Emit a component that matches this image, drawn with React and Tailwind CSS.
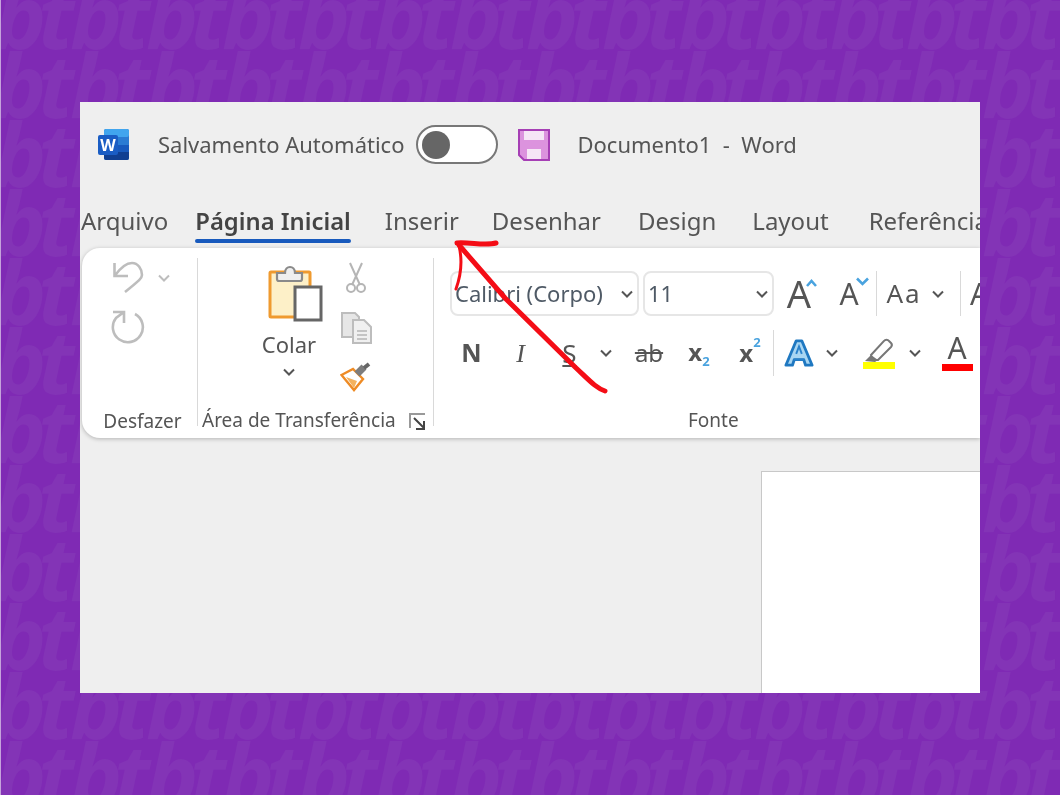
const patternRows = Array.from({ length: 14 }, (_, i) => i);
const patternCols = Array.from({ length: 16 }, (_, i) => i);

function Pattern() {
  return (
    <div className="absolute inset-0 overflow-hidden select-none">
      <div className="-ml-[38px] -mt-[88px]">
        {patternRows.map((row) => (
          <div
            key={row}
            className="flex whitespace-nowrap text-[88px] leading-[69px] font-bold italic text-[#8334b6] font-['Open_Sans',sans-serif] tracking-[-4px]"
          >
            {patternCols.map((col) => (
              <span key={col} className="w-[76px] shrink-0">tb</span>
            ))}
          </div>
        ))}
      </div>
      <div className="absolute left-0 top-0 bottom-0 w-px bg-[#c5a3dc]" />
    </div>
  );
}

function Chevron({ className = "", color = "#555" }) {
  return (
    <svg width="14" height="10" viewBox="0 0 14 10" className={`shrink-0 ${className}`}>
      <path d="M2 2.5 7 7.5 12 2.5" fill="none" stroke={color} strokeWidth="2" />
    </svg>
  );
}

function WordLogo() {
  return (
    <svg width="32" height="32" viewBox="0 0 32 32">
      <rect x="6" y="0" width="25" height="31" rx="2" fill="#2b7cd3" />
      <rect x="6" y="0" width="25" height="8" rx="2" fill="#41a5ee" />
      <rect x="6" y="16" width="25" height="8" fill="#185abd" />
      <path d="M6 23h25v6a2 2 0 0 1-2 2H8a2 2 0 0 1-2-2z" fill="#103f91" />
      <rect x="0" y="6" width="20" height="20" rx="2" fill="#1a5dc4" />
      <text x="10" y="22" textAnchor="middle" fontSize="16" fontWeight="700" fill="#fff" fontFamily="'Open Sans',sans-serif">W</text>
    </svg>
  );
}

function SaveIcon() {
  return (
    <svg width="32" height="32" viewBox="0 0 32 32">
      <path d="M1 1H31V31H6L1 26z" fill="#dc93de" stroke="#a63fb5" strokeWidth="2" />
      <rect x="6" y="2" width="20" height="9" fill="#f6e6f6" />
      <rect x="9" y="20" width="14" height="10" fill="#f6e6f6" />
    </svg>
  );
}

function UndoIcon() {
  return (
    <svg width="32" height="34" viewBox="0 0 32 34">
      <path d="M1.5 2V15H15M1.5 15C8 6 14 2 19 2C25 2 29 8 29 14C29 17 27 19 12 31" fill="none" stroke="#bdbdbd" strokeWidth="2.6" />
    </svg>
  );
}

function RedoIcon() {
  return (
    <svg width="34" height="34" viewBox="0 0 34 34">
      <path d="M24 4A15 15 0 1 1 5 8L13 2M2 2H13V13" fill="none" stroke="#bdbdbd" strokeWidth="2.6" />
    </svg>
  );
}

function PasteIcon() {
  return (
    <svg width="56" height="58" viewBox="0 0 56 58">
      <rect x="2" y="8" width="40" height="45" rx="1" fill="#fdf0c8" stroke="#ef9a2f" strokeWidth="3" />
      <path d="M9 15V9H17C17 1 27 1 27 9H34V15C34 17 33 17 32 17H11C10 17 9 17 9 15z" fill="#efefef" stroke="#8a8a8a" strokeWidth="2.2" />
      <rect x="27" y="23" width="26" height="33" fill="#fff" stroke="#666" strokeWidth="3" />
    </svg>
  );
}

function ScissorsIcon() {
  return (
    <svg width="20" height="32" viewBox="0 0 20 32">
      <path d="M4 1 14 23M16 1 6 23" fill="none" stroke="#b5b5b5" strokeWidth="2" />
      <circle cx="5" cy="26" r="4" fill="none" stroke="#b5b5b5" strokeWidth="2" />
      <circle cx="15" cy="26" r="4" fill="none" stroke="#b5b5b5" strokeWidth="2" />
    </svg>
  );
}

function CopyIcon() {
  return (
    <svg width="32" height="32" viewBox="0 0 32 32">
      <path d="M2 1h13l4 4v20H2z" fill="#e6e6e6" stroke="#bdbdbd" strokeWidth="2" />
      <path d="M13 8h11l7 7v16H13z" fill="#f0f0f0" stroke="#bdbdbd" strokeWidth="2" />
      <path d="M17 19h10M17 23h10M17 27h10" stroke="#c4c4c4" strokeWidth="2" />
    </svg>
  );
}

function BrushIcon() {
  return (
    <svg width="32" height="30" viewBox="0 0 32 30">
      <path d="M1.5 13 13 7 23 17 14 28z" fill="#fff" stroke="#ee8b25" strokeWidth="2.4" />
      <path d="M6 15 17 19 14 26z" fill="#f4b25e" />
      <path d="M17 12 24 5" fill="none" stroke="#7d7d7d" strokeWidth="7" />
      <path d="M24 6 29 2" fill="none" stroke="#666" strokeWidth="4" />
    </svg>
  );
}

function LauncherIcon() {
  return (
    <svg width="18" height="18" viewBox="0 0 18 18">
      <path d="M1 15V1h15" fill="none" stroke="#999" strokeWidth="2" />
      <path d="M5 5 15 15M15 8v8H7" fill="none" stroke="#444" strokeWidth="2" />
    </svg>
  );
}

function Cell({ className = "", children }) {
  return <div className={`flex items-center justify-center shrink-0 ${className}`}>{children}</div>;
}

function Separator({ className = "" }) {
  return <div className={`w-px bg-[#d9d9d9] shrink-0 ${className}`} />;
}

function FontSelect({ className = "", label }) {
  return (
    <div className={`flex items-center justify-between h-[45px] border-2 border-[#e6e6e6] rounded-lg shrink-0 pl-[3px] pr-[3px] ${className}`}>
      <span className="text-[22px] text-[#4f5a66]">{label}</span>
      <Chevron />
    </div>
  );
}

function TitleBar() {
  return (
    <div className="flex items-center h-[85px] pl-[18px] text-[#555] text-[22px]">
      <WordLogo />
      <span className="ml-[28px]">Salvamento Automático</span>
      <div className="ml-[12px] flex items-center w-[82px] h-[39px] rounded-full border-2 border-[#777] bg-white pl-[4px]">
        <div className="w-[28px] h-[28px] rounded-full bg-[#666]" />
      </div>
      <div className="ml-[20px]">
        <SaveIcon />
      </div>
      <span className="ml-[27px]">Documento1&nbsp; -&nbsp; Word</span>
    </div>
  );
}

function Tabs() {
  return (
    <div className="flex h-[61px] items-start text-[#555] text-[24px] leading-[68px] whitespace-nowrap">
      <span className="ml-px">Arquivo</span>
      <span className="relative ml-[27px] font-semibold text-[#444] text-[23.8px]">
        Página Inicial
        <span className="absolute left-0 right-0 top-[52px] h-[4px] rounded-full bg-[#185abd]" />
      </span>
      <span className="ml-[34px]">Inserir</span>
      <span className="ml-[33px]">Desenhar</span>
      <span className="ml-[37px]">Design</span>
      <span className="ml-[36px]">Layout</span>
      <span className="ml-[40px]">Referências</span>
    </div>
  );
}

function UndoGroup() {
  return (
    <div className="flex flex-col w-[115px] shrink-0 h-full">
      <div className="flex items-center gap-[12px] mt-[13px] ml-[31px]">
        <UndoIcon />
        <Chevron color="#bdbdbd" />
      </div>
      <div className="ml-[29px] mt-[15px]">
        <RedoIcon />
      </div>
      <span className="mt-auto mb-[3px] self-center text-[19px] text-[#555] ml-[6px]">Desfazer</span>
    </div>
  );
}

function ClipboardGroup() {
  return (
    <div className="flex flex-col w-[235px] shrink-0 h-full">
      <div className="flex">
        <div className="flex flex-col items-center w-[112px] ml-[35px] shrink-0">
          <div className="mt-[16px] ml-[13px]">
            <PasteIcon />
          </div>
          <span className="mt-[8px] text-[22px] leading-[28px] text-[#555]">Colar</span>
          <Chevron className="mt-[9px]" />
        </div>
        <div className="flex flex-col items-center -ml-[5px] w-[32px]">
          <div className="mt-[14px]"><ScissorsIcon /></div>
          <div className="mt-[18px]"><CopyIcon /></div>
          <div className="mt-[18px]"><BrushIcon /></div>
        </div>
      </div>
      <div className="mt-auto mb-[4px] flex items-center pl-[4px] text-[19px] text-[#555] whitespace-nowrap">
        <span>Área de Transferência</span>
        <span className="ml-[13px] mt-[4px]"><LauncherIcon /></span>
      </div>
    </div>
  );
}

function FontGroup() {
  return (
    <div className="flex flex-col flex-1 min-w-0 h-full">
      <div className="flex items-center mt-[23px] ml-[16px]">
        <FontSelect className="w-[189px]" label="Calibri (Corpo)" />
        <FontSelect className="w-[131px] ml-[4px]" label="11" />
        <Cell className="w-[50px] relative">
          <span className="text-[38px] leading-[45px] text-[#555]">A</span>
          <span className="absolute left-[31px] top-[8px]">
            <svg width="13" height="9" viewBox="0 0 13 9"><path d="M2 7 6.5 2 11 7" fill="none" stroke="#4aa3df" strokeWidth="2.6" /></svg>
          </span>
        </Cell>
        <Cell className="w-[50px] relative">
          <span className="text-[30px] leading-[45px] text-[#555]">A</span>
          <span className="absolute left-[32px] top-[6px]">
            <svg width="13" height="9" viewBox="0 0 13 9"><path d="M1 1.5 6.5 7 12 1.5" fill="none" stroke="#4aa3df" strokeWidth="2.6" /></svg>
          </span>
        </Cell>
        <Separator className="h-[45px] ml-[2px]" />
        <Cell className="w-[54px]">
          <span className="text-[26px] tracking-[2px] text-[#555]">Aa</span>
        </Cell>
        <Chevron />
        <Separator className="h-[45px] ml-[15px]" />
        <span className="text-[30px] ml-[9px] text-[#555]">A</span>
      </div>
      <div className="flex items-center mt-[17px] ml-[13px] h-[40px] text-[#555]">
        <Cell className="w-[49px] text-[25px] font-bold">N</Cell>
        <Cell className="w-[49px] text-[26px] italic font-['Liberation_Serif',serif]">I</Cell>
        <Cell className="w-[49px] text-[26px] underline">S</Cell>
        <Cell className="w-[24px]"><Chevron /></Cell>
        <Cell className="w-[62px] text-[24px] line-through">ab</Cell>
        <Cell className="w-[38px] text-[24px] font-bold items-start">
          x<span className="text-[13px] text-[#4aa3df] mt-[18px]">2</span>
        </Cell>
        <Cell className="w-[49px] ml-[6px] pl-[3px] text-[24px] font-bold items-start">
          x<span className="text-[13px] text-[#4aa3df] -mt-[2px]">2</span>
        </Cell>
        <Separator className="h-[46px]" />
        <Cell className="w-[50px]">
          <svg width="30" height="30" viewBox="0 0 32 30">
            <path d="M2 28 13 2h6l11 26h-7l-2-6H11l-2 6z" fill="#a9d6f2" stroke="#1f78c1" strokeWidth="3" strokeLinejoin="round" />
            <path d="M10 22h12M13 16l3-8 3 8" fill="none" stroke="#2a82cc" strokeWidth="2" />
          </svg>
        </Cell>
        <Cell className="w-[16px]"><Chevron /></Cell>
        <Cell className="w-[62px] ml-[8px]">
          <svg width="32" height="32" viewBox="0 0 32 32">
            <path d="M8 18 21 4a3 3 0 0 1 5 0l2 2a3 3 0 0 1 0 4L15 23l-5 0z" fill="#fff" stroke="#777" strokeWidth="2" />
            <path d="M2 24 8 18l7 5-3 2z" fill="#777" />
            <rect x="0" y="25" width="32" height="7" fill="#ffff00" />
          </svg>
        </Cell>
        <Cell className="w-[16px] ml-[-3px]"><Chevron /></Cell>
        <Cell className="w-[32px] ml-[18px] flex-col">
          <span className="text-[30px] leading-[26px] font-normal">A</span>
          <span className="w-[31px] h-[7px] bg-[#ff0000] mt-[3px]" />
        </Cell>
      </div>
      <span className="mt-auto mb-[4px] ml-[254px] text-[19px] text-[#555]">Fonte</span>
    </div>
  );
}

function Ribbon() {
  return (
    <div className="flex ml-[2px] h-[190px] bg-white rounded-l-[18px] shadow-[0_1px_4px_rgba(0,0,0,0.25)] relative">
      <UndoGroup />
      <Separator className="h-[168px] mt-[10px]" />
      <ClipboardGroup />
      <Separator className="h-[168px] mt-[10px]" />
      <FontGroup />
    </div>
  );
}

function RedArrow() {
  return (
    <svg className="absolute inset-0 pointer-events-none" width="1060" height="795" viewBox="0 0 1060 795">
      <path d="M605 391C596 388 590 381 575 367L505 298 459 245" fill="none" stroke="#f40d16" strokeWidth="5" strokeLinecap="round" />
      <path d="M457 243C470 242 485 246 496 243" fill="none" stroke="#f40d16" strokeWidth="5" strokeLinecap="round" />
      <path d="M459 246C463 262 461 275 456 289" fill="none" stroke="#f40d16" strokeWidth="3" strokeLinecap="round" />
    </svg>
  );
}

export default function App() {
  return (
    <div className="relative w-[1060px] h-[795px] bg-[#7f2ab4] overflow-hidden font-['Noto_Sans',sans-serif]">
      <Pattern />
      <div className="relative flex justify-center pt-[102px]">
        <div className="w-[900px] h-[591px] bg-[#efefef] overflow-hidden flex flex-col whitespace-nowrap blur-[0.5px]">
          <TitleBar />
          <Tabs />
          <Ribbon />
          <div className="flex-1 flex justify-end pt-[33px]">
            <div className="w-[219px] bg-white border-l border-t border-[#c8c8c8]" />
          </div>
        </div>
      </div>
      <RedArrow />
    </div>
  );
}
